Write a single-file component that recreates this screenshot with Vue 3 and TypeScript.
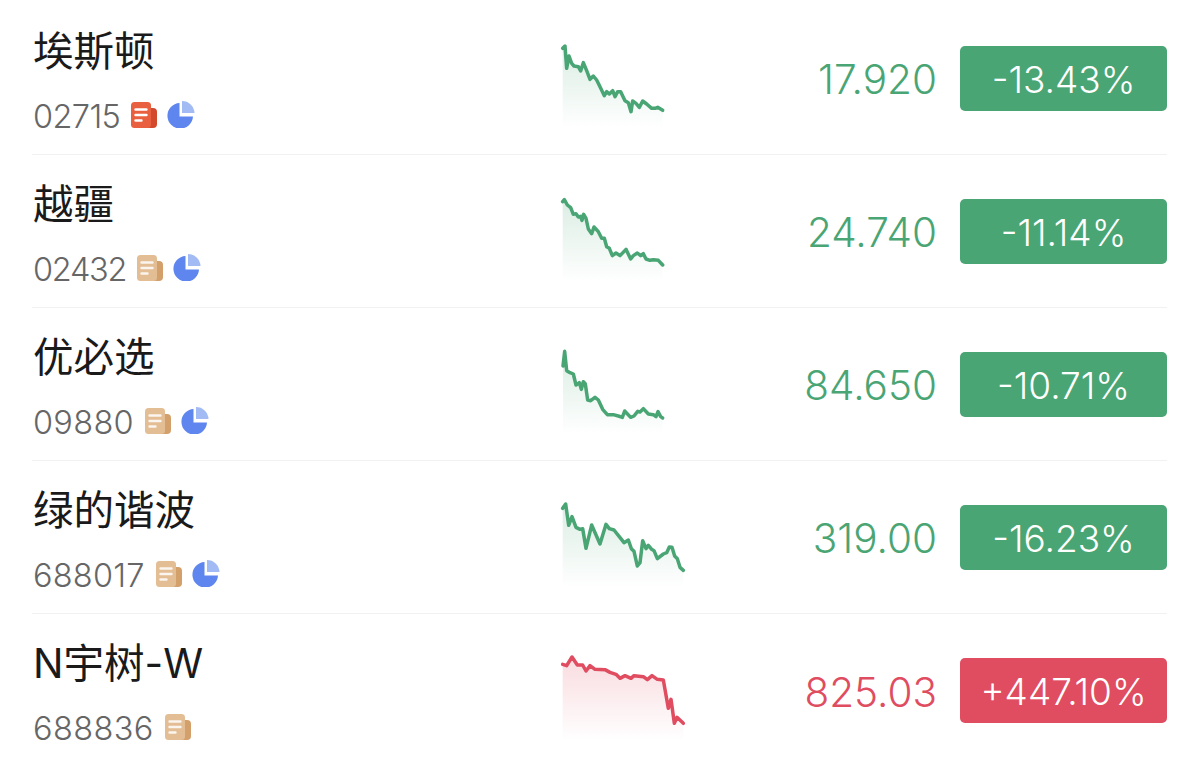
<template>
  <div class="list">
    <div v-for="s in stocks" :key="s.code" class="row">
      <div class="info">
        <div class="name">{{ s.name }}</div>
        <div class="sub">
          <span class="code" :style="{ letterSpacing: s.track + 'px' }">{{ s.code }}</span>
          <svg class="doc" viewBox="0 0 26 26">
            <path :fill="s.hot ? '#d2492c' : '#d3a06c'" d="M15 6h7a4 4 0 0 1 4 4v12a4 4 0 0 1-4 4h-8z" />
            <rect :fill="s.hot ? '#e8603f' : '#e3bd94'" x="0" y="0" width="20" height="26" rx="3.5" />
            <path d="M4.5 7.5h11M4.5 13h11M4.5 18.5h6" stroke="#fff" stroke-width="2.4" stroke-linecap="round" fill="none" :opacity="s.hot ? 1 : 0.85" />
          </svg>
          <svg v-if="s.pie" class="pie" viewBox="0 0 28 28">
            <path fill="#5f86ee" d="M12.5 3v13.5h13.5a12.8 12.8 0 1 1-13.5-13.5z" />
            <path fill="#a3bbf5" d="M15 1a12.5 12.5 0 0 1 12.5 12h-12.5z" />
          </svg>
        </div>
      </div>
      <svg class="spark" viewBox="0 0 420 300">
        <defs>
          <linearGradient :id="'g' + s.code" x1="0" y1="0" x2="0" y2="1">
            <stop offset="0" :stop-color="s.up ? '#e04c60' : '#4aa574'" stop-opacity="0.2" />
            <stop offset="1" :stop-color="s.up ? '#e04c60' : '#4aa574'" stop-opacity="0" />
          </linearGradient>
        </defs>
        <path :d="areaPath(s)" :fill="'url(#g' + s.code + ')'" />
        <path :d="linePath(s)" fill="none" :stroke="s.up ? '#e04c60' : '#4aa574'" stroke-width="10.5" stroke-linejoin="round" stroke-linecap="round" />
      </svg>
      <div class="price" :class="{ up: s.up }">{{ s.price }}</div>
      <div class="badge" :class="{ up: s.up }">{{ s.change }}</div>
    </div>
  </div>
</template>

<script setup lang="ts">
interface Stock {
  name: string;
  code: string;
  price: string;
  change: string;
  up: boolean;
  hot: boolean;
  pie: boolean;
  shift: number;
  track: number;
  pts: number[][];
}

const stocks: Stock[] = [
  {
    name: "埃斯顿", code: "02715", price: "17.920", change: "-13.43%", up: false, hot: true, pie: true, shift: -6, track: -0.6,
    pts: [[38,55],[45,48],[50,115],[57,78],[65,100],[72,108],[85,110],[92,123],[100,98],[110,122],[120,148],[130,138],[140,150],[150,170],[163,197],[170,185],[178,192],[188,182],[195,200],[203,185],[212,185],[225,212],[235,218],[243,245],[248,213],[258,220],[268,232],[278,213],[290,222],[305,235],[315,235],[323,232],[338,241]],
  },
  {
    name: "越疆", code: "02432", price: "24.740", change: "-11.14%", up: false, hot: false, pie: true, shift: 0, track: -1.3,
    pts: [[38,50],[43,44],[52,60],[62,68],[70,88],[78,86],[85,96],[92,94],[96,106],[101,88],[108,100],[115,132],[125,146],[132,126],[145,140],[155,160],[163,160],[170,185],[178,190],[187,212],[198,204],[210,212],[228,193],[242,222],[250,212],[262,204],[272,212],[280,206],[288,222],[300,226],[310,224],[325,226],[338,240]],
  },
  {
    name: "优必选", code: "09880", price: "84.650", change: "-10.71%", up: false, hot: false, pie: true, shift: 6, track: 0.3,
    pts: [[39,78],[44,34],[50,92],[60,98],[70,102],[78,135],[88,128],[94,148],[100,125],[106,132],[113,180],[122,182],[135,172],[145,180],[158,208],[172,224],[190,224],[205,228],[217,232],[224,213],[242,232],[252,228],[263,214],[270,216],[280,206],[295,222],[310,224],[318,230],[324,215],[332,230],[338,234]],
  },
  {
    name: "绿的谐波", code: "688017", price: "319.00", change: "-16.23%", up: false, hot: false, pie: true, shift: -3, track: 0.2,
    pts: [[38,55],[47,42],[56,106],[66,80],[78,112],[90,118],[98,116],[108,175],[125,105],[150,162],[168,103],[178,116],[192,120],[212,145],[222,158],[235,150],[244,176],[252,184],[262,228],[270,218],[278,152],[288,176],[295,166],[305,178],[312,182],[322,206],[340,192],[350,188],[358,171],[366,172],[374,198],[382,206],[390,232],[400,241]],
  },
  {
    name: "N宇树-W", code: "688836", price: "825.03", change: "+447.10%", up: true, hot: false, pie: false, shift: 3, track: 0.4,
    pts: [[38,58],[50,62],[66,36],[82,60],[98,60],[108,78],[120,62],[135,73],[165,74],[180,82],[198,88],[210,100],[225,92],[243,100],[252,92],[280,95],[292,104],[306,92],[322,103],[340,105],[355,190],[363,163],[373,235],[381,217],[400,235]],
  },
];

const linePath = (s: Stock) =>
  s.pts.map((p, i) => (i ? "L" : "M") + p[0] + " " + (p[1] + s.shift)).join("");

const areaPath = (s: Stock) => {
  const first = s.pts[0][0];
  const last = s.pts[s.pts.length - 1][0];
  return linePath(s) + "L" + last + " 290L" + first + " 290Z";
};
</script>

<style>
html,
body {
  background: #fff;
}
</style>

<style scoped>
.list {
  width: 1200px;
  height: 762px;
  box-sizing: border-box;
  padding: 2px 33px 0 32px;
  overflow: hidden;
  background: #fff;
  font-family: "Inter", "Noto Sans CJK SC", sans-serif;
}

.row {
  display: flex;
  align-items: center;
  height: 153px;
  box-sizing: border-box;
  border-bottom: 1px solid #f1f1f1;
}

.row:last-child {
  border-bottom: none;
}

.info {
  width: 518px;
  flex-shrink: 0;
  padding-left: 1px;
  padding-top: 7px;
  box-sizing: border-box;
}

.name {
  font-size: 40.5px;
  line-height: 50px;
  color: #1a1a1a;
}

.sub {
  display: flex;
  align-items: center;
  margin-top: 20px;
  height: 40px;
}

.code {
  font-size: 32.5px;
  font-weight: 300;
  color: #666;
  line-height: 40px;
}

.doc {
  width: 26px;
  height: 26px;
  margin-left: 11px;
  margin-top: -4px;
}

.pie {
  width: 28px;
  height: 28px;
  margin-left: 10px;
  margin-top: -5px;
}

.spark {
  width: 140px;
  height: 100px;
  flex-shrink: 0;
  align-self: flex-start;
  margin-top: 30px;
}

.price {
  flex: 1;
  text-align: right;
  font-size: 40.5px;
  font-weight: 300;
  color: #4aa574;
  padding-top: 3px;
}

.price.up {
  color: #e04c60;
}

.badge {
  width: 207px;
  height: 65px;
  margin-left: 23px;
  flex-shrink: 0;
  box-sizing: border-box;
  padding-top: 2px;
  border-radius: 5px;
  background: #4aa574;
  color: #fff;
  font-size: 37px;
  font-weight: 300;
  display: flex;
  align-items: center;
  justify-content: center;
}

.badge.up {
  background: #e04c60;
}
</style>
